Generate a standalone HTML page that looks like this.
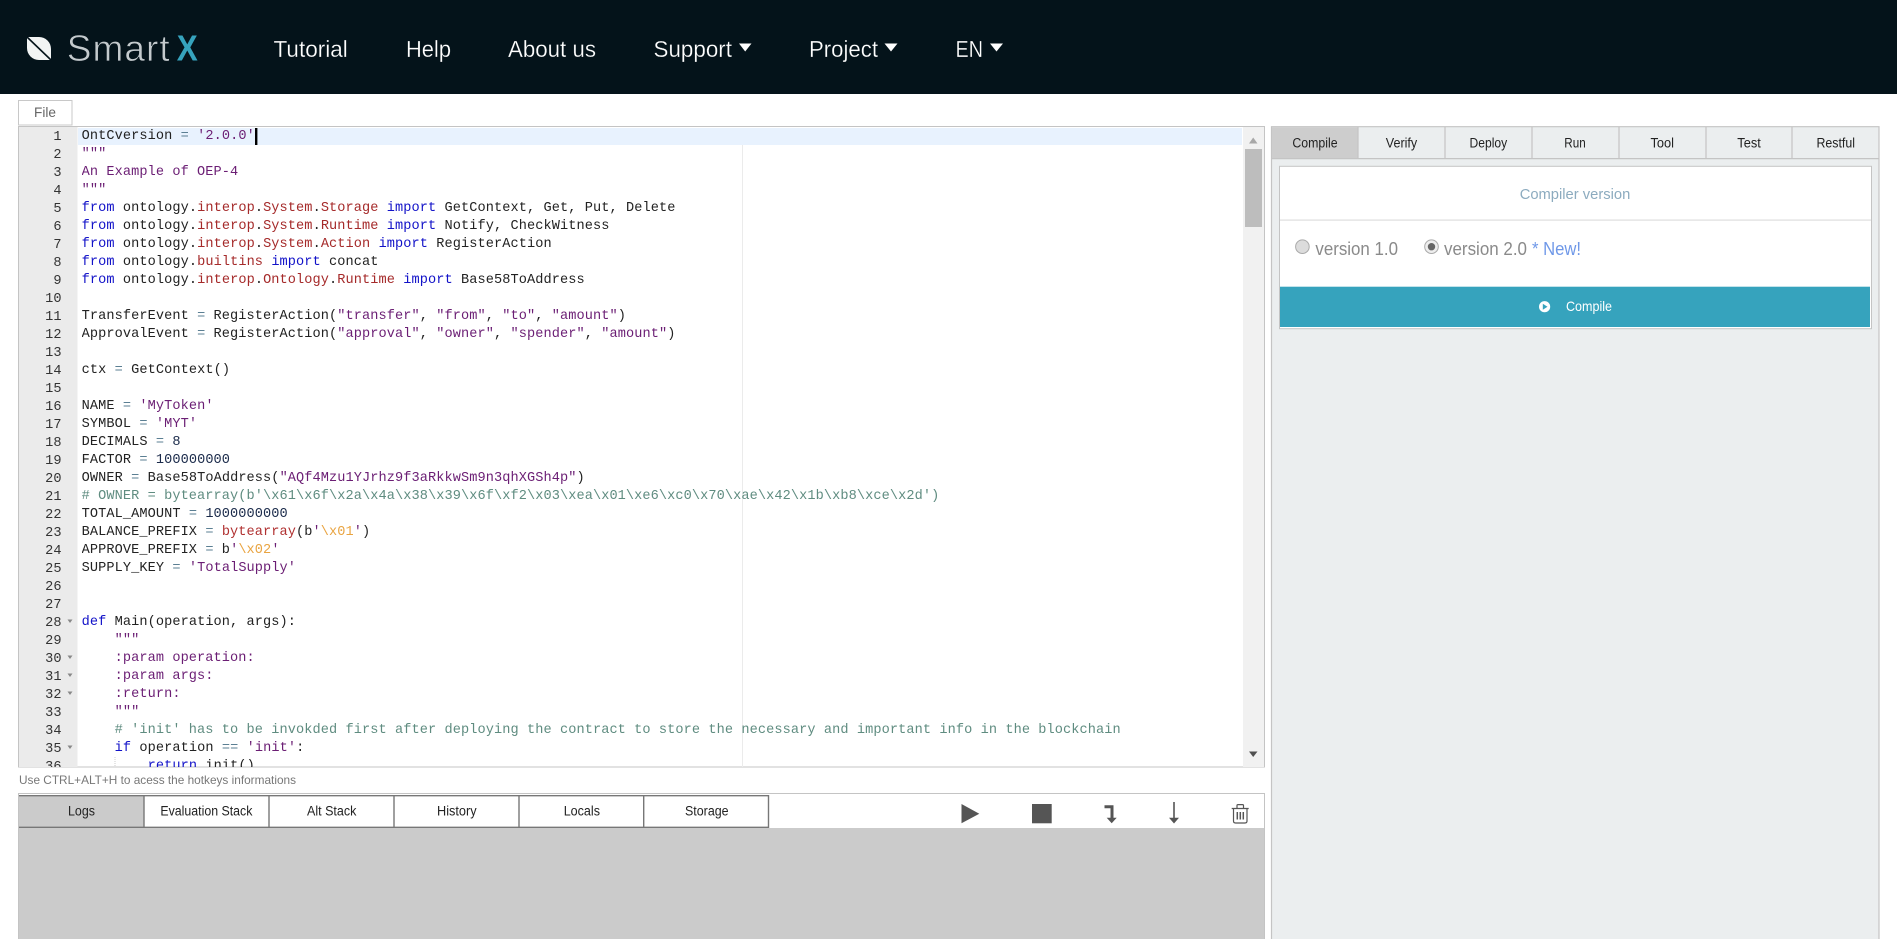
<!DOCTYPE html>
<html lang="en"><head><meta charset="utf-8"><title>SmartX</title>
<style>
html,body{margin:0;padding:0;background:#fff;width:1897px;height:939px;overflow:hidden}
#g{position:absolute;left:0;top:0;display:block}
svg text{font-family:"Liberation Sans",sans-serif}
.nums,.code{position:absolute;overflow:hidden;font:13.600px/18px "Liberation Mono",monospace;color:#222}
.nums{left:19px;top:129px;height:638px;width:42.500px;text-align:right;color:#333}
.code{left:81.600px;top:127.800px;height:639px;width:1160px;letter-spacing:.09px}
.nums div,.code div{height:18px;white-space:pre}
.k{color:#1212c8}.l{color:#a52a2a}.s{color:#6b1e74}.c{color:#5f8c80}.e{color:#e9a441}.o{color:#5b7f93}.n{color:#1a2a4a}.b{color:#b03030}
</style></head><body>
<svg id="g" width="1897" height="939" viewBox="0 0 1897 939">
<rect x="0" y="0" width="1897" height="94" fill="#04131a"/>
<path d="M27 37H39A12 12 0 0 1 51 49V60H39A12 12 0 0 1 27 48Z" fill="#f2f4f4"/>
<path d="M27 37L51 60" stroke="#04131a" stroke-width="1.600"/>
<text x="66.700" y="61" font-size="37" fill="#c4cacd" stroke="#04131a" stroke-width=".7" textLength="103" lengthAdjust="spacing">Smart</text>
<text x="176.700" y="60.500" font-size="36" font-weight="700" fill="#36a3bd" textLength="21" lengthAdjust="spacingAndGlyphs">X</text>
<g font-size="23" fill="#fff" stroke="#04131a" stroke-width=".25">
<text x="273.500" y="57" textLength="74.300" lengthAdjust="spacingAndGlyphs">Tutorial</text>
<text x="406" y="57" textLength="45" lengthAdjust="spacingAndGlyphs">Help</text>
<text x="508" y="57" textLength="88" lengthAdjust="spacingAndGlyphs">About us</text>
<text x="653.500" y="57" textLength="78.500" lengthAdjust="spacingAndGlyphs">Support</text>
<text x="809" y="57" textLength="69" lengthAdjust="spacingAndGlyphs">Project</text>
<text x="955.500" y="57" textLength="27.500" lengthAdjust="spacingAndGlyphs">EN</text>
</g>
<path d="M739 43.500H751.500L745.200 51.500ZM884.500 43.500H897.500L891 51.500ZM990 43.500H1003L996.500 51.500Z" fill="#fff"/>

<rect x="18.500" y="100.500" width="53.500" height="24.500" fill="#fff" stroke="#c8c8c8"/>
<text x="34" y="117" font-size="14" fill="#666" textLength="22" lengthAdjust="spacingAndGlyphs">File</text>

<rect x="18.500" y="126.500" width="1246" height="640.500" fill="#fff" stroke="#c4c4c4"/>
<rect x="19" y="127" width="58.500" height="640" fill="#ebebeb"/>
<rect x="78" y="128" width="1164" height="17" fill="#e8f2fe"/>
<rect x="742" y="145" width="1" height="622" fill="#ebebeb"/>
<rect x="1243" y="127" width="21" height="640" fill="#f1f1f1"/>
<rect x="1245" y="149" width="17" height="78" fill="#bdbdbd"/>
<path d="M1249 143.500H1257.500L1253.200 137.500Z" fill="#a8a8a8"/>
<path d="M1249 751.500H1257.500L1253.200 757Z" fill="#505050"/>
<path d="M67.500 619.500h5l-2.500 3.500zM67.500 655.500h5l-2.500 3.500zM67.500 673.500h5l-2.500 3.500zM67.500 691.500h5l-2.500 3.500zM67.500 745.500h5l-2.500 3.500z" fill="#888"/>
<rect x="255" y="128" width="2.400" height="17" fill="#000"/>
<path d="M115 757V767" stroke="#ccc" stroke-dasharray="1 1"/>

<text x="19" y="784" font-size="12" fill="#777" textLength="277" lengthAdjust="spacingAndGlyphs">Use CTRL+ALT+H to acess the hotkeys informations</text>

<rect x="19" y="794" width="1245" height="145" fill="#fff"/>
<path d="M18.500 939V793.500H1264.500V939" fill="none" stroke="#c4c4c4"/>
<rect x="19" y="828" width="1245" height="111" fill="#cbcbcb"/>
<rect x="19" y="795.500" width="125" height="32" fill="#cbcbcb"/>
<path d="M19 795.700H768.500V827.300H19M144 795.700V827.300M269 795.700V827.300M394 795.700V827.300M519 795.700V827.300M643.700 795.700V827.300" fill="none" stroke="#777" stroke-width="1.400"/>
<g font-size="13.500" fill="#222">
<text x="68" y="815.500" textLength="27" lengthAdjust="spacingAndGlyphs">Logs</text>
<text x="160.400" y="815.500" textLength="92" lengthAdjust="spacingAndGlyphs">Evaluation Stack</text>
<text x="307" y="815.500" textLength="49.400" lengthAdjust="spacingAndGlyphs">Alt Stack</text>
<text x="437" y="815.500" textLength="39.600" lengthAdjust="spacingAndGlyphs">History</text>
<text x="563.700" y="815.500" textLength="36.300" lengthAdjust="spacingAndGlyphs">Locals</text>
<text x="685" y="815.500" textLength="43.600" lengthAdjust="spacingAndGlyphs">Storage</text>
</g>
<path d="M961.500 804L979.300 813.700L961.500 823.300Z" fill="#555"/>
<rect x="1032" y="804" width="19.700" height="19.300" fill="#555"/>
<path d="M1104.500 806.700H1112V818" fill="none" stroke="#555" stroke-width="3"/>
<path d="M1106.700 817.700H1116.700L1111.700 823.300Z" fill="#555"/>
<path d="M1174 802V818" stroke="#555" stroke-width="1.600"/>
<path d="M1169 817.700H1179L1174 823.500Z" fill="#555"/>
<g fill="none" stroke="#555" stroke-width="1.200">
<path d="M1231.700 808.500H1248.700"/>
<path d="M1237 808V805.500Q1237 804.600 1238 804.600H1242.500Q1243.500 804.600 1243.500 805.500V808"/>
<path d="M1233.500 808.500V821Q1233.500 823 1235.500 823H1245Q1247 823 1247 821V808.500"/>
<path d="M1237.300 812V819.500M1240.300 812V819.500M1243.300 812V819.500" stroke-width="1.500"/>
</g>

<rect x="1271.500" y="127" width="607.500" height="812" fill="#ebeeef"/>
<path d="M1271.500 939V126.700H1879V939" fill="none" stroke="#c4c4c4" stroke-width="1.200"/>
<rect x="1272" y="127.300" width="86" height="31" fill="#cdcdcd"/>
<path d="M1272 158.600H1879M1358 127V158.600M1445 127V158.600M1532 127V158.600M1619 127V158.600M1706 127V158.600M1792 127V158.600" stroke="#c4c4c4" stroke-width="1.200" fill="none"/>
<g font-size="13.500" fill="#222">
<text x="1292.400" y="147.500" textLength="45.200" lengthAdjust="spacingAndGlyphs">Compile</text>
<text x="1385.800" y="147.500" textLength="31.400" lengthAdjust="spacingAndGlyphs">Verify</text>
<text x="1469.500" y="147.500" textLength="37.700" lengthAdjust="spacingAndGlyphs">Deploy</text>
<text x="1564.300" y="147.500" textLength="21.400" lengthAdjust="spacingAndGlyphs">Run</text>
<text x="1650.500" y="147.500" textLength="23.500" lengthAdjust="spacingAndGlyphs">Tool</text>
<text x="1737.300" y="147.500" textLength="23.500" lengthAdjust="spacingAndGlyphs">Test</text>
<text x="1816.500" y="147.500" textLength="38.500" lengthAdjust="spacingAndGlyphs">Restful</text>
</g>
<rect x="1279.500" y="166.300" width="592" height="162.400" fill="#fff" stroke="#c4c4c4"/>
<rect x="1280" y="219.500" width="591" height="1.200" fill="#dedede"/>
<text x="1519.700" y="199" font-size="15" fill="#8cabbf" textLength="110.600" lengthAdjust="spacingAndGlyphs">Compiler version</text>
<circle cx="1302.400" cy="246.700" r="6.800" fill="#dcdcdc" stroke="#aaa"/>
<text x="1315.400" y="255" font-size="18" fill="#8a8a8a" textLength="82.600" lengthAdjust="spacingAndGlyphs">version 1.0</text>
<circle cx="1431.500" cy="246.700" r="6.800" fill="#eee" stroke="#aaa"/>
<circle cx="1431.500" cy="246.700" r="3.700" fill="#666"/>
<text x="1444" y="255" font-size="18" fill="#8a8a8a" textLength="83" lengthAdjust="spacingAndGlyphs">version 2.0</text>
<text x="1532" y="255" font-size="18" fill="#6f98e8" textLength="49" lengthAdjust="spacingAndGlyphs">* New!</text>
<rect x="1280" y="286.700" width="590" height="40.300" fill="#36a3bd"/>
<circle cx="1544.600" cy="306.700" r="5.600" fill="#fff"/>
<path d="M1542.800 303.700L1547.500 306.700L1542.800 309.700Z" fill="#36a3bd"/>
<text x="1566" y="311" font-size="14" fill="#fff" textLength="46" lengthAdjust="spacingAndGlyphs">Compile</text>
</svg>

<div class="nums"><div>1</div><div>2</div><div>3</div><div>4</div><div>5</div><div>6</div><div>7</div><div>8</div><div>9</div><div>10</div><div>11</div><div>12</div><div>13</div><div>14</div><div>15</div><div>16</div><div>17</div><div>18</div><div>19</div><div>20</div><div>21</div><div>22</div><div>23</div><div>24</div><div>25</div><div>26</div><div>27</div><div>28</div><div>29</div><div>30</div><div>31</div><div>32</div><div>33</div><div>34</div><div>35</div><div>36</div></div>

<div class="code"><div>OntCversion <span class="o">=</span> <span class="s">'2.0.0'</span></div>
<div class="s">"""</div>
<div class="s">An Example of OEP-4</div>
<div class="s">"""</div>
<div><span class="k">from</span> ontology.<span class="l">interop</span>.<span class="l">System</span>.<span class="l">Storage</span> <span class="k">import</span> GetContext, Get, Put, Delete</div>
<div><span class="k">from</span> ontology.<span class="l">interop</span>.<span class="l">System</span>.<span class="l">Runtime</span> <span class="k">import</span> Notify, CheckWitness</div>
<div><span class="k">from</span> ontology.<span class="l">interop</span>.<span class="l">System</span>.<span class="l">Action</span> <span class="k">import</span> RegisterAction</div>
<div><span class="k">from</span> ontology.<span class="l">builtins</span> <span class="k">import</span> concat</div>
<div><span class="k">from</span> ontology.<span class="l">interop</span>.<span class="l">Ontology</span>.<span class="l">Runtime</span> <span class="k">import</span> Base58ToAddress</div>
<div></div>
<div>TransferEvent <span class="o">=</span> RegisterAction(<span class="s">"transfer"</span>, <span class="s">"from"</span>, <span class="s">"to"</span>, <span class="s">"amount"</span>)</div>
<div>ApprovalEvent <span class="o">=</span> RegisterAction(<span class="s">"approval"</span>, <span class="s">"owner"</span>, <span class="s">"spender"</span>, <span class="s">"amount"</span>)</div>
<div></div>
<div>ctx <span class="o">=</span> GetContext()</div>
<div></div>
<div>NAME <span class="o">=</span> <span class="s">'MyToken'</span></div>
<div>SYMBOL <span class="o">=</span> <span class="s">'MYT'</span></div>
<div>DECIMALS <span class="o">=</span> <span class="n">8</span></div>
<div>FACTOR <span class="o">=</span> <span class="n">100000000</span></div>
<div>OWNER <span class="o">=</span> Base58ToAddress(<span class="s">"AQf4Mzu1YJrhz9f3aRkkwSm9n3qhXGSh4p"</span>)</div>
<div class="c"># OWNER = bytearray(b'\x61\x6f\x2a\x4a\x38\x39\x6f\xf2\x03\xea\x01\xe6\xc0\x70\xae\x42\x1b\xb8\xce\x2d')</div>
<div>TOTAL_AMOUNT <span class="o">=</span> <span class="n">1000000000</span></div>
<div>BALANCE_PREFIX <span class="o">=</span> <span class="b">bytearray</span>(b<span class="s">'</span><span class="e">\x01</span><span class="s">'</span>)</div>
<div>APPROVE_PREFIX <span class="o">=</span> b<span class="s">'</span><span class="e">\x02</span><span class="s">'</span></div>
<div>SUPPLY_KEY <span class="o">=</span> <span class="s">'TotalSupply'</span></div>
<div></div>
<div></div>
<div><span class="k">def</span> Main(operation, args):</div>
<div class="s">    """</div>
<div class="s">    :param operation:</div>
<div class="s">    :param args:</div>
<div class="s">    :return:</div>
<div class="s">    """</div>
<div class="c">    # 'init' has to be invokded first after deploying the contract to store the necessary and important info in the blockchain</div>
<div>    <span class="k">if</span> operation <span class="o">==</span> <span class="s">'init'</span>:</div>
<div>        <span class="k">return</span> init()</div></div>
</body></html>
